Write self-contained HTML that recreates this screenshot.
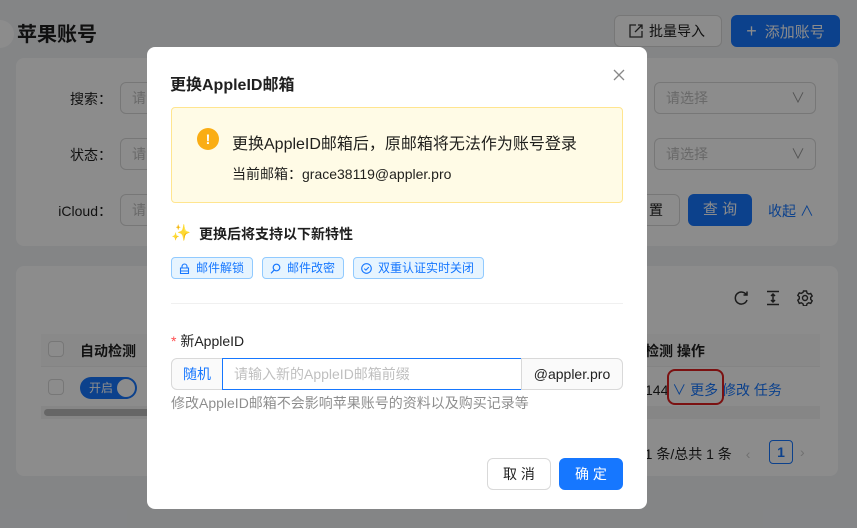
<!DOCTYPE html>
<html><head><meta charset="utf-8"><style>
*{box-sizing:border-box;margin:0;padding:0}
body{width:857px;height:528px;overflow:hidden;background:#f0f2f5;font-family:"Liberation Sans","Noto Sans CJK SC",sans-serif;font-size:14px;color:rgba(0,0,0,.88);position:relative}
.a{position:absolute}
.card{position:absolute;background:#fff;border-radius:8px}
.inp{position:absolute;border:1px solid #d9d9d9;border-radius:6px;background:#fff;height:32px;color:#bfbfbf;padding:5px 11px}
.lbl{position:absolute;width:100px;text-align:right;left:12px}
.btn{position:absolute;border:1px solid #d9d9d9;border-radius:6px;background:#fff;height:32px;text-align:center;line-height:30px}
.pri{background:#1677ff;border-color:#1677ff;color:#fff}
.mask{position:absolute;left:0;top:0;width:857px;height:528px;background:rgba(0,0,0,.45)}
.modal{position:absolute;left:147px;top:47px;width:500px;height:462px;background:#fff;border-radius:8px}
.tag{position:absolute;top:210px;height:22px;background:#e6f4ff;border:1px solid #91caff;border-radius:4px;color:#1677ff;font-size:12px;line-height:20px;padding-left:24px}
.tag svg{position:absolute;left:7px;top:5px}
</style></head><body>
<div class="a" style="left:-14px;top:20px;width:28px;height:28px;border-radius:50%;background:#fff"></div>
<div class="a" style="left:17px;top:18px;font-size:20px;font-weight:bold">苹果账号</div>
<div class="btn" style="left:614px;top:15px;width:108px;">
<svg class="a" style="left:14px;top:8px" width="14" height="14" viewBox="0 0 14 14" fill="none" stroke="#333" stroke-width="1.3"><path d="M7 1H1v12h12V7M6 8l7-7M9 1h4v4"/></svg><span style="margin-left:18px">批量导入</span></div>
<div class="btn pri" style="left:731px;top:15px;width:109px;font-size:15px"><span style="font-size:18px;margin-right:8px">+</span>添加账号</div>
<div class="card" style="left:16px;top:58px;width:822px;height:188px"></div>
<div class="lbl" style="top:89px">搜索：</div><div class="inp" style="left:120px;top:82px;width:60px">请</div>
<div class="lbl" style="top:145px">状态：</div><div class="inp" style="left:120px;top:138px;width:60px">请</div>
<div class="lbl" style="top:201px">iCloud：</div><div class="inp" style="left:120px;top:194px;width:60px">请</div>
<div class="inp" style="left:654px;top:82px;width:162px">请选择<span style="position:absolute;right:10px;color:#999">∨</span></div>
<div class="inp" style="left:654px;top:138px;width:162px">请选择<span style="position:absolute;right:10px;color:#999">∨</span></div>
<div class="btn" style="left:620px;top:194px;width:60px;text-align:right;padding-right:16px">置</div>
<div class="btn pri" style="left:688px;top:194px;width:64px;font-size:15px">查 询</div>
<div class="a" style="left:768px;top:201px;color:#1677ff">收起 ∧</div>
<div class="card" style="left:16px;top:266px;width:822px;height:210px"></div>
<svg class="a" style="left:733px;top:290px" width="16" height="16" viewBox="0 0 16 16" fill="none" stroke="#333" stroke-width="1.5"><path d="M13.5 5A6 6 0 1 0 14 10M14 1.5V5h-3.5"/></svg>
<svg class="a" style="left:765px;top:290px" width="16" height="16" viewBox="0 0 16 16" fill="none" stroke="#333" stroke-width="1.5"><path d="M2 1.5h12M2 14.5h12M8 4v8M6 6l2-2 2 2M6 10l2 2 2-2"/></svg>
<svg class="a" style="left:797px;top:290px" width="16" height="16" viewBox="0 0 16 16" fill="none" stroke="#333" stroke-width="1.4"><circle cx="8" cy="8" r="2.5"/><path d="M6.5 1h3l.5 2 1.7 1 2-.6 1.5 2.6-1.5 1.4v2l1.5 1.4-1.5 2.6-2-.6-1.7 1-.5 2h-3l-.5-2-1.7-1-2 .6L.8 10.2 2.3 8.8v-2L.8 5.4 2.3 2.8l2 .6L6 2.4z"/></svg>
<div class="a" style="left:41px;top:334px;width:779px;height:33px;background:#fafafa;border-bottom:1px solid #f0f0f0"></div>
<div class="a" style="left:48px;top:341px;width:16px;height:16px;border:1px solid #d9d9d9;border-radius:4px;background:#fff"></div>
<div class="a" style="left:80px;top:341px;font-weight:bold">自动检测</div>
<div class="a" style="left:645px;top:341px;font-weight:bold">检测 操作</div>
<div class="a" style="left:48px;top:379px;width:16px;height:16px;border:1px solid #d9d9d9;border-radius:4px;background:#fff"></div>
<div class="a" style="left:80px;top:377px;width:57px;height:22px;border-radius:11px;background:#1677ff;color:#fff;font-size:12px;line-height:22px;padding-left:9px">开启<span style="position:absolute;right:2px;top:2px;width:18px;height:18px;border-radius:50%;background:#fff"></span></div>
<div class="a" style="left:645px;top:380px">144 <span style="color:#1677ff">∨ 更多 修改 任务</span></div>
<div class="a" style="left:667px;top:369px;width:57px;height:36px;border:2px solid #e02020;border-radius:8px"></div>
<div class="a" style="left:41px;top:406px;width:779px;height:13px;background:#f5f5f5"></div>
<div class="a" style="left:44px;top:409px;width:300px;height:7px;border-radius:4px;background:#bbb"></div>
<div class="a" style="left:640px;top:444px">-1 条/总共 1 条 <span style="color:#ccc;margin-left:10px">‹</span></div>
<div class="a" style="left:769px;top:440px;width:24px;height:24px;border:1px solid #1677ff;border-radius:4px;color:#1677ff;text-align:center;line-height:22px;font-weight:bold">1</div>
<div class="a" style="left:800px;top:444px;color:#ccc">›</div>
<div class="mask"></div>
<div class="modal">
<div class="a" style="left:23px;top:24px;font-size:16px;font-weight:bold">更换AppleID邮箱</div>
<svg class="a" style="left:466px;top:22px" width="12" height="12" viewBox="0 0 12 12" stroke="#888" stroke-width="1.3"><path d="M1 1l10 10M11 1L1 11"/></svg>
<div class="a" style="left:24px;top:60px;width:452px;height:96px;background:#fffbe6;border:1px solid #ffe58f;border-radius:4px"></div>
<div class="a" style="left:50px;top:81px;width:22px;height:22px;border-radius:50%;background:#faad14;color:#fff;text-align:center;line-height:22px;font-weight:bold;font-size:14px">!</div>
<div class="a" style="left:85px;top:83px;font-size:16px">更换AppleID邮箱后，原邮箱将无法作为账号登录</div>
<div class="a" style="left:85px;top:117px;font-size:14px">当前邮箱：grace38119@appler.pro</div>
<div class="a" style="left:24px;top:176px;font-size:16px;color:#f5c518">✨</div>
<div class="a" style="left:52px;top:177px;font-weight:bold">更换后将支持以下新特性</div>
<div class="tag" style="left:24px;width:82px"><svg width="11" height="11" viewBox="0 0 11 11" fill="none" stroke="#1677ff" stroke-width="1.1"><path d="M3 5V3.5a2.5 2.5 0 0 1 5 0V5M1.5 5h8v5.5h-8zM1.5 8h8"/></svg>邮件解锁</div>
<div class="tag" style="left:115px;width:82px"><svg width="11" height="11" viewBox="0 0 11 11" fill="none" stroke="#1677ff" stroke-width="1.2"><circle cx="6.5" cy="4.5" r="3.3"/><path d="M4.2 7L1 10.3"/></svg>邮件改密</div>
<div class="tag" style="left:206px;width:131px"><svg width="11" height="11" viewBox="0 0 11 11" fill="none" stroke="#1677ff" stroke-width="1.1"><circle cx="5.5" cy="5.5" r="4.8"/><path d="M3.3 5.6l1.6 1.5 2.9-3"/></svg>双重认证实时关闭</div>
<div class="a" style="left:24px;top:256px;width:452px;height:1px;background:#f0f0f0"></div>
<div class="a" style="left:24px;top:284px"><span style="color:#ff4d4f">* </span>新AppleID</div>
<div class="a" style="left:24px;top:311px;width:52px;height:32px;background:#fafafa;border:1px solid #d9d9d9;border-radius:6px 0 0 6px;color:#1677ff;text-align:center;line-height:30px">随机</div>
<div class="a" style="left:75px;top:311px;width:300px;height:32px;border:1px solid #1677ff;color:#bfbfbf;padding:5px 11px;line-height:20px;background:#fff">请输入新的AppleID邮箱前缀</div>
<div class="a" style="left:374px;top:311px;width:102px;height:32px;background:#fafafa;border:1px solid #d9d9d9;border-radius:0 6px 6px 0;text-align:center;line-height:30px">@appler.pro</div>
<div class="a" style="left:24px;top:346px;color:rgba(0,0,0,.45)">修改AppleID邮箱不会影响苹果账号的资料以及购买记录等</div>
<div class="btn" style="left:340px;top:411px;width:64px">取 消</div>
<div class="btn pri" style="left:412px;top:411px;width:64px">确 定</div>
</div>
</body></html>
